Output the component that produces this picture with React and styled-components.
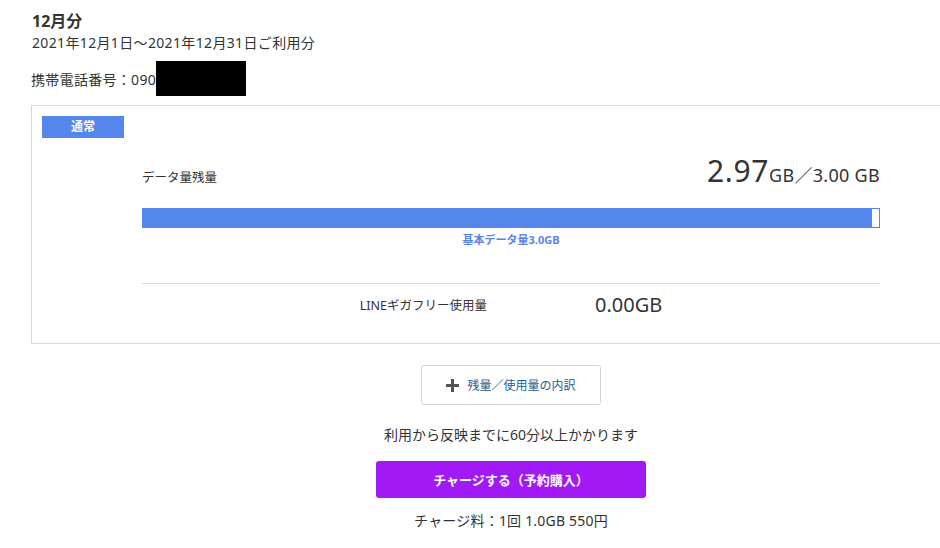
import React from "react";
import styled, { createGlobalStyle } from "styled-components";

const Global = createGlobalStyle`
  html, body { margin: 0; padding: 0; background: #fff; overflow: hidden; }
  body {
    font-family: "Noto Sans", "Noto Sans CJK JP", sans-serif;
    color: #333;
  }
  * { box-sizing: border-box; }
`;

const Page = styled.div`
  width: 991px;
  padding-left: 31px;
  padding-top: 10px;
`;

const Title = styled.div`
  font-size: 16px;
  font-weight: 700;
  line-height: 22px;
  padding-left: 1px;
`;

const Period = styled.div`
  font-size: 14px;
  line-height: 22px;
  padding-left: 1px;
  letter-spacing: 0.35px;
`;

const PhoneRow = styled.div`
  display: flex;
  align-items: center;
  margin-top: 7px;
  font-size: 14px;
  letter-spacing: 0.3px;
  height: 35px;
`;

const Masked = styled.span`
  display: inline-block;
  width: 90px;
  height: 35px;
  background: #000;
`;

const Card = styled.section`
  margin-top: 9px;
  width: 960px;
  border: 1px solid #d9d9d9;
  padding: 10px 10px 19px;
`;

const Badge = styled.div`
  width: 82px;
  height: 22px;
  line-height: 22px;
  background: #5486eb;
  color: #fff;
  font-size: 12px;
  font-weight: 700;
  text-align: center;
`;

const Inner = styled.div`
  margin: 0 100px;
`;

const DataRow = styled.div`
  display: flex;
  justify-content: space-between;
  align-items: baseline;
  margin-top: 12px;
`;

const Label = styled.span`
  font-size: 12.5px;
`;

const Amount = styled.span`
  font-size: 18px;
  letter-spacing: 0.3px;
`;

const Big = styled.span`
  font-size: 30px;
  letter-spacing: 0.6px;
`;

const Bar = styled.div`
  margin-top: 17px;
  height: 20px;
  border: 1px solid #5486eb;
  background: #fff;
`;

const Fill = styled.div`
  height: 100%;
  background: #5486eb;
`;

const BarCaption = styled.div`
  margin-top: 4px;
  text-align: center;
  font-size: 11px;
  line-height: 16px;
  font-weight: 700;
  color: #5b82e6;
`;

const LineRow = styled.div`
  margin-top: 35px;
  border-top: 1px solid #d9d9d9;
  height: 41px;
  display: flex;
  justify-content: center;
  align-items: center;
  gap: 108px;
`;

const LineValue = styled.span`
  font-size: 20px;
`;

const Actions = styled.div`
  width: 960px;
  display: flex;
  flex-direction: column;
  align-items: center;
`;

const DetailButton = styled.button`
  margin-top: 21px;
  width: 180px;
  height: 40px;
  border: 1px solid #d5d5d5;
  border-radius: 3px;
  background: #fff;
  display: flex;
  align-items: center;
  justify-content: center;
  gap: 8px;
  font-family: inherit;
  font-size: 12px;
  color: #1f5b91;
  padding: 0;
  cursor: pointer;
`;

const Note = styled.div`
  margin-top: 20px;
  font-size: 14px;
  line-height: 20px;
`;

const ChargeButton = styled.button`
  margin-top: 16px;
  width: 270px;
  height: 37px;
  border: none;
  border-radius: 3px;
  background: #a119f5;
  color: #fff;
  font-family: inherit;
  font-size: 13px;
  font-weight: 700;
  cursor: pointer;
`;

const Fee = styled.div`
  margin-top: 13px;
  font-size: 14px;
  line-height: 20px;
  letter-spacing: 0.2px;
`;

const PlusIcon = () => (
  <svg width="13" height="13" viewBox="0 0 13 13" aria-hidden="true">
    <rect x="5" y="0" width="3" height="13" fill="#555" />
    <rect x="0" y="5" width="13" height="3" fill="#555" />
  </svg>
);

export default function App() {
  const remaining = 2.97;
  const total = 3.0;
  return (
    <>
      <Global />
      <Page>
        <Title>12月分</Title>
        <Period>2021年12月1日～2021年12月31日ご利用分</Period>
        <PhoneRow>
          携帯電話番号：090
          <Masked />
        </PhoneRow>
        <Card>
          <Badge>通常</Badge>
          <Inner>
            <DataRow>
              <Label>データ量残量</Label>
              <Amount>
                <Big>2.97</Big>GB／3.00 GB
              </Amount>
            </DataRow>
            <Bar>
              <Fill style={{ width: `${(remaining / total) * 100}%` }} />
            </Bar>
            <BarCaption>基本データ量3.0GB</BarCaption>
            <LineRow>
              <Label>LINEギガフリー使用量</Label>
              <LineValue>0.00GB</LineValue>
            </LineRow>
          </Inner>
        </Card>
        <Actions>
          <DetailButton>
            <PlusIcon />
            残量／使用量の内訳
          </DetailButton>
          <Note>利用から反映までに60分以上かかります</Note>
          <ChargeButton>チャージする（予約購入）</ChargeButton>
          <Fee>チャージ料：1回 1.0GB 550円</Fee>
        </Actions>
      </Page>
    </>
  );
}
